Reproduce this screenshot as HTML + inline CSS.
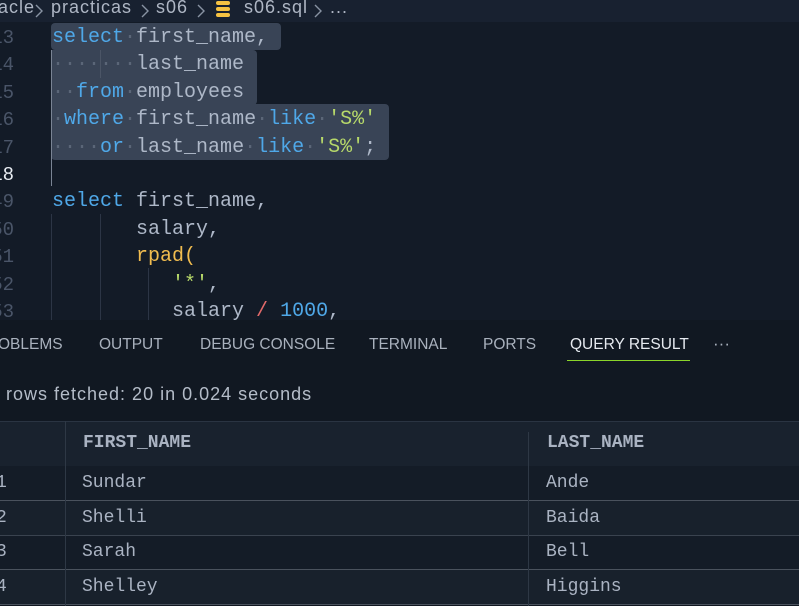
<!DOCTYPE html>
<html><head><style>
body{margin:0;width:799px;height:606px;overflow:hidden;background:#131b27;font-family:"Liberation Sans",sans-serif;position:relative}
.bc{position:absolute;left:0;top:0;width:799px;height:22px;background:#182130;color:#aeb6c4;font-size:18px;letter-spacing:1px;line-height:16px;white-space:pre}
.bc span{position:absolute;top:-1px}
.ln{position:absolute;left:-30px;width:44px;text-align:right;font-family:"Liberation Mono",monospace;font-size:19px;color:#4a5568}
.code{position:absolute;left:52px;font-family:"Liberation Mono",monospace;font-size:20px;color:#aeb8c8;white-space:pre;line-height:27.4px}
.k{color:#4fa8e8}.s{color:#b7d96a}.f{color:#f0bc4f}.o{color:#e26a6a}.d{color:#5b6678}
.sel{position:absolute;background:#394456;border-radius:4px}
.g{position:absolute;width:1px;background:#2c3545}
.panel{position:absolute;left:0;top:320px;width:799px;height:286px;background:#111822}
.tab{position:absolute;top:16px;font-size:15.5px;color:#a9b1bd}
.t{position:absolute;font-family:"Liberation Mono",monospace;font-size:18px;color:#aab3c2}
.ch{position:absolute;top:3px}
</style></head><body>
<div class="bc"><span style="left:-2px">acle</span><span style="left:51px">practicas</span><span style="left:156px">s06</span><span style="left:244px">s06.sql</span><span style="left:330px">...</span>
<svg class="ch" style="left:34px" width="10" height="16"><path d="M2 2 L8 8 L2 14" stroke="#8893a3" stroke-width="1.4" fill="none"/></svg>
<svg class="ch" style="left:140px" width="10" height="16"><path d="M2 2 L8 8 L2 14" stroke="#8893a3" stroke-width="1.4" fill="none"/></svg>
<svg class="ch" style="left:196px" width="10" height="16"><path d="M2 2 L8 8 L2 14" stroke="#8893a3" stroke-width="1.4" fill="none"/></svg>
<svg class="ch" style="left:313px" width="10" height="16"><path d="M2 2 L8 8 L2 14" stroke="#8893a3" stroke-width="1.4" fill="none"/></svg>
<svg style="position:absolute;left:215px;top:0" width="17" height="18"><rect x="1" y="1" width="14" height="4" rx="2" fill="#f5c242"/><rect x="1" y="7" width="14" height="4" rx="2" fill="#f5c242"/><rect x="1" y="13" width="14" height="4" rx="2" fill="#f5c242"/></svg>
</div>

<div class="sel" style="left:51px;top:23px;width:230px;height:27px"></div>
<div class="sel" style="left:51px;top:50px;width:206px;height:55px;border-radius:0 4px 4px 0"></div>
<div class="sel" style="left:51px;top:104px;width:338px;height:56px;border-radius:0 4px 4px 4px"></div>
<div class="g" style="left:51px;top:50px;height:136px;background:#7a8494"></div>
<div class="g" style="left:100px;top:50px;height:28px;background:#4b5566"></div>
<div class="g" style="left:51px;top:214px;height:110px"></div>
<div class="g" style="left:100px;top:214px;height:110px"></div>
<div class="g" style="left:148px;top:268px;height:56px"></div>

<div class="ln" style="top:27px">13</div><div class="ln" style="top:54px">14</div><div class="ln" style="top:82px">15</div><div class="ln" style="top:109px">16</div><div class="ln" style="top:137px">17</div><div class="ln" style="top:164px;color:#e8ecf2">18</div><div class="ln" style="top:191px">49</div><div class="ln" style="top:219px">50</div><div class="ln" style="top:246px">51</div><div class="ln" style="top:274px">52</div><div class="ln" style="top:301px">53</div>

<div class="code" style="top:24px"><span class="k">select</span><span class="d">·</span>first_name,
<span class="d">·······</span>last_name
<span class="d">··</span><span class="k">from</span><span class="d">·</span>employees
<span class="d">·</span><span class="k">where</span><span class="d">·</span>first_name<span class="d">·</span><span class="k">like</span><span class="d">·</span><span class="s">'S%'</span>
<span class="d">····</span><span class="k">or</span><span class="d">·</span>last_name<span class="d">·</span><span class="k">like</span><span class="d">·</span><span class="s">'S%'</span>;

<span class="k">select</span> first_name,
       salary,
       <span class="f">rpad(</span>
          <span class="s">'*'</span>,
          salary <span class="o">/</span> <span class="k">1000</span>,</div>

<div class="panel">
<div class="tab" style="left:-2px">OBLEMS</div><div class="tab" style="left:99px">OUTPUT</div><div class="tab" style="left:200px">DEBUG CONSOLE</div><div class="tab" style="left:369px">TERMINAL</div><div class="tab" style="left:483px">PORTS</div><div class="tab" style="left:570px;color:#e6eaf0">QUERY RESULT</div><div class="tab" style="left:713px;top:14px;font-size:17px">···</div>
<div style="position:absolute;left:567px;top:40px;width:123px;height:1px;background:#8bd42a"></div>
<div style="position:absolute;left:6px;top:64px;font-size:18px;letter-spacing:1px;color:#b4bcc8">rows fetched: 20 in 0.024 seconds</div>
<div style="position:absolute;left:0;top:101px;width:799px;height:44px;background:#19222e;border-top:1px solid #2a3442;border-bottom:1px solid #39424f"></div>
<div style="position:absolute;left:0;top:146px;width:799px;height:34px;background:#141c27"></div>
<div style="position:absolute;left:0;top:180px;width:799px;height:34px;background:#18212c;border-top:1px solid #4a525d"></div>
<div style="position:absolute;left:0;top:215px;width:799px;height:34px;background:#141c27;border-top:1px solid #3a434f"></div>
<div style="position:absolute;left:0;top:249px;width:799px;height:34px;background:#18212c;border-top:1px solid #4a525d;border-bottom:1px solid #4a525d"></div>
<div style="position:absolute;left:65px;top:101px;width:1px;height:185px;background:#2e3845"></div>
<div style="position:absolute;left:528px;top:112px;width:1px;height:174px;background:#2e3845"></div>
<div class="t" style="left:83px;top:113px;font-weight:bold;font-size:18px">FIRST_NAME</div><div class="t" style="left:547px;top:113px;font-weight:bold;font-size:18px">LAST_NAME</div>
<div class="t" style="left:-4px;top:153px">1</div><div class="t" style="left:82px;top:153px">Sundar</div><div class="t" style="left:546px;top:153px">Ande</div>
<div class="t" style="left:-4px;top:188px">2</div><div class="t" style="left:82px;top:188px">Shelli</div><div class="t" style="left:546px;top:188px">Baida</div>
<div class="t" style="left:-4px;top:222px">3</div><div class="t" style="left:82px;top:222px">Sarah</div><div class="t" style="left:546px;top:222px">Bell</div>
<div class="t" style="left:-4px;top:257px">4</div><div class="t" style="left:82px;top:257px">Shelley</div><div class="t" style="left:546px;top:257px">Higgins</div>
</div>
</body></html>
